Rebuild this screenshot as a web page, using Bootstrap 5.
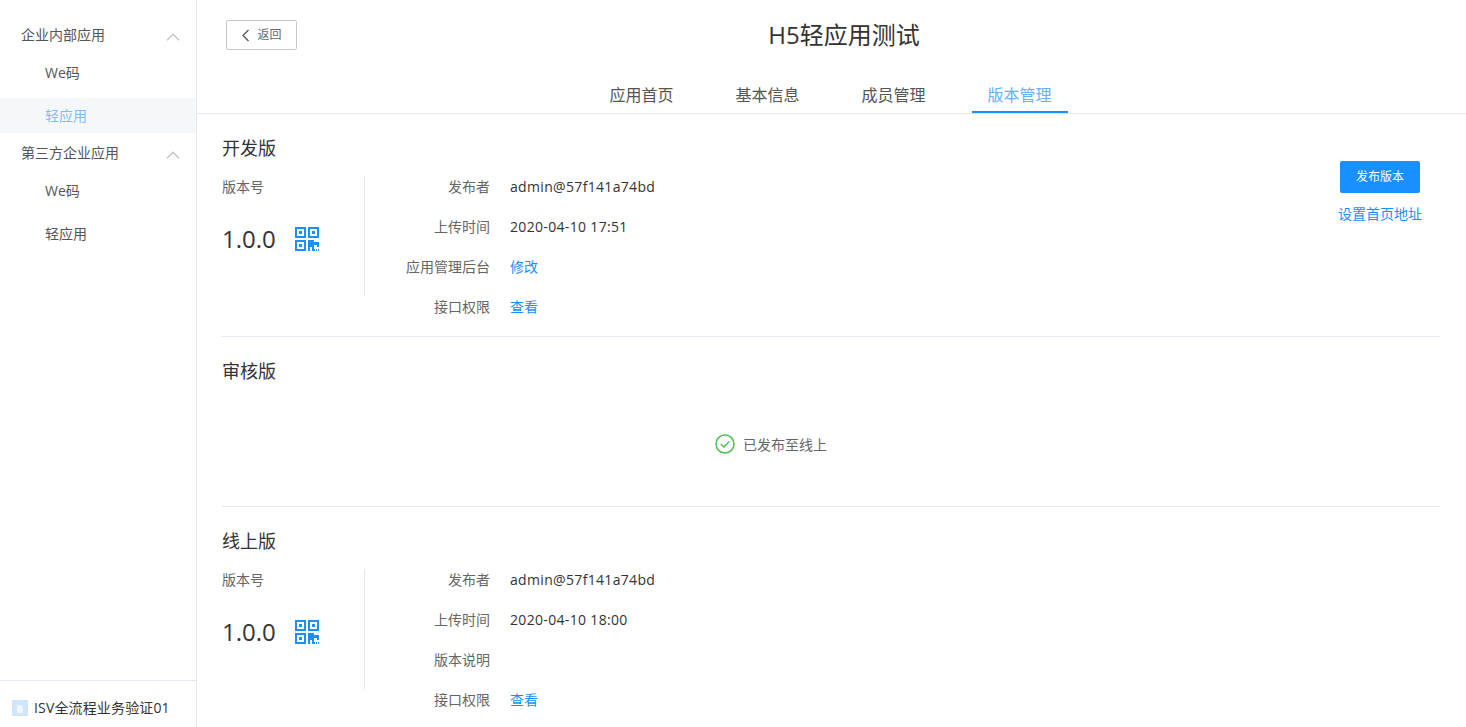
<!DOCTYPE html>
<html lang="zh">
<head>
<meta charset="utf-8">
<title>版本管理</title>
<link rel="stylesheet" href="https://cdn.jsdelivr.net/npm/bootstrap@5.3.0/dist/css/bootstrap.min.css">
<style>
html,body{height:727px;overflow:hidden}
body{font-family:"Open Sans","Noto Sans CJK SC",sans-serif;font-size:14px;color:#333;background:#fff}
.shell{height:727px}
.side{width:197px;flex:none;border-right:1px solid #e1e8ef;height:727px}
.side-list{padding-top:15px}
.side-group{height:40px;padding:0 16px 2px 21px;font-size:14px;color:#555}
.side-group svg{margin-top:6px}
.side-item{height:36px;padding:0 0 2px 45px;font-size:14px;color:#555}
.side-item + .side-item{margin-top:7px}
.side-item.active-item{height:35px;padding-bottom:0;background:#f5f8fb;color:#7dbcff}
.side-foot{height:47px;border-top:1px solid #e1e8ef;padding:7px 0 0 12px;color:#333;font-size:14px;gap:6px}
.side-foot span{letter-spacing:.15px}
.main-pane{min-width:0}
.head-wrap{height:114px;border-bottom:1px solid #e1e8ef;position:relative}
.head-top{height:73px;padding:20px 0 0 29px}
.back-btn{width:71px;height:30px;border:1px solid #c9c9c9;border-radius:2px;font-size:12px;color:#666;gap:7px;background:#fff;padding:0}
.page-title{position:absolute;left:25px;right:0;top:17px;margin:0;text-align:center;font-size:24px;font-weight:400;line-height:36px;color:#333;pointer-events:none}
.tab-row{height:40px;gap:30px;padding-right:2px}
.tab-link{width:96px;height:40px;font-size:16px;color:#555;text-decoration:none;text-align:center;line-height:44px;display:block}
.tab-link.on{color:#66b0ff;border-bottom:2px solid #1890ff}
.sect{margin:0 26px 0 25px;border-bottom:1px solid #e1e8ef}
.sect-a{height:223px;padding-top:21px}
.sect-b{height:170px;padding-top:21px}
.sect-c{border:0;padding-top:21px}
.sect-title{font-size:18px;font-weight:400;line-height:26px;margin:0 0 15px;color:#333}
.ver-col{width:143px;height:120px;border-right:1px solid #e1e8ef;flex:none}
.ver-label{font-size:14px;color:#666;line-height:22px}
.ver-num{font-size:24px;line-height:34px;color:#333;margin-top:24px;gap:19px}
.info-list{margin:0;padding:0;list-style:none}
.info-row{height:40px;margin:0}
.info-key{width:125px;text-align:right;font-size:14px;color:#666;line-height:22px;margin:0}
.info-val{margin:0 0 0 20px;font-size:14px;line-height:22px;color:#333;letter-spacing:.33px}
.info-val a,.link-plain{color:#1890ff;text-decoration:none;font-size:14px;letter-spacing:0}
.act-col{width:120px;margin-top:-15px}
.pub-btn{width:80px;height:32px;background:#1890ff;border:0;border-radius:2px;color:#fff;font-size:12px;padding:0}
.link-plain{margin-top:10px;line-height:22px}
.done-row{height:92px;gap:8px;color:#666;font-size:14px;padding-right:120px;margin-top:-1px}
</style>
</head>
<body>
<div class="shell d-flex">
  <aside class="side d-flex flex-column">
    <div class="side-list flex-grow-1">
      <div class="side-group d-flex align-items-center justify-content-between">
        <span>企业内部应用</span>
        <svg width="14" height="8" viewBox="0 0 14 8" fill="none" stroke="#c4c4c4" stroke-width="1.4"><path d="M1 7.200 7 1.200l6 6"/></svg>
      </div>
      <div class="side-item d-flex align-items-center">We码</div>
      <div class="side-item active-item d-flex align-items-center">轻应用</div>
      <div class="side-group d-flex align-items-center justify-content-between">
        <span>第三方企业应用</span>
        <svg width="14" height="8" viewBox="0 0 14 8" fill="none" stroke="#c4c4c4" stroke-width="1.4"><path d="M1 7.200 7 1.200l6 6"/></svg>
      </div>
      <div class="side-item d-flex align-items-center">We码</div>
      <div class="side-item d-flex align-items-center">轻应用</div>
    </div>
    <div class="side-foot d-flex align-items-center">
      <svg width="16" height="16" viewBox="0 0 16 16"><rect width="16" height="16" fill="#cfe6fd"/><path d="M5 13V5h4l2 2.500V13z" fill="#eef7ff"/></svg>
      <span>ISV全流程业务验证01</span>
    </div>
  </aside>
  <main class="main-pane flex-grow-1">
    <header class="head-wrap">
      <div class="head-top">
        <button type="button" class="back-btn btn d-flex align-items-center justify-content-center">
          <svg width="9" height="13" viewBox="0 0 9 13" fill="none" stroke="#555" stroke-width="1.3"><path d="M7.500 1 2 6.500 7.500 12"/></svg>
          <span>返回</span>
        </button>
      </div>
      <h1 class="page-title">H5轻应用测试</h1>
      <nav class="tab-row d-flex justify-content-center">
        <a class="tab-link" href="#">应用首页</a>
        <a class="tab-link" href="#">基本信息</a>
        <a class="tab-link" href="#">成员管理</a>
        <a class="tab-link on" href="#">版本管理</a>
      </nav>
    </header>

    <section class="sect sect-a">
      <h2 class="sect-title">开发版</h2>
      <div class="d-flex">
        <div class="ver-col">
          <div class="ver-label">版本号</div>
          <div class="ver-num d-flex align-items-center">
            <span>1.0.0</span>
            <svg width="24" height="24" viewBox="0 0 24 24"><g fill="#1890ff"><path d="M0 0h11v11H0zM13 0h11v11H13zM0 13h11v11H0z"/><path d="M13 13h6v2h5v5h-2v-2h-3v6h-2v-4h-2v4h-2z"/><path d="M19 22h1v2h-1zM21 22h1v2h-1zM23 22h1v2h-1z"/></g><g fill="#fff"><path d="M2 2h7v7H2zM15 2h7v7h-7zM2 15h7v7H2z"/></g><g fill="#1890ff"><path d="M4 4h3v3H4zM17 4h3v3h-3zM4 17h3v3H4z"/></g></svg>
          </div>
        </div>
        <ul class="info-list flex-grow-1">
          <li class="info-row d-flex"><p class="info-key">发布者</p><p class="info-val">admin@57f141a74bd</p></li>
          <li class="info-row d-flex"><p class="info-key">上传时间</p><p class="info-val">2020-04-10 17:51</p></li>
          <li class="info-row d-flex"><p class="info-key">应用管理后台</p><p class="info-val"><a href="#">修改</a></p></li>
          <li class="info-row d-flex"><p class="info-key">接口权限</p><p class="info-val"><a href="#">查看</a></p></li>
        </ul>
        <div class="act-col d-flex flex-column align-items-center">
          <button type="button" class="pub-btn btn">发布版本</button>
          <a class="link-plain" href="#">设置首页地址</a>
        </div>
      </div>
    </section>

    <section class="sect sect-b">
      <h2 class="sect-title">审核版</h2>
      <div class="done-row d-flex align-items-center justify-content-center">
        <svg width="20" height="20" viewBox="0 0 20 20" fill="none" stroke="#4fbf4f" stroke-width="1.500"><circle cx="10" cy="10" r="9"/><path d="M5.800 10.200 8.800 13l5.400-5.600"/></svg>
        <span>已发布至线上</span>
      </div>
    </section>

    <section class="sect sect-c">
      <h2 class="sect-title">线上版</h2>
      <div class="d-flex">
        <div class="ver-col">
          <div class="ver-label">版本号</div>
          <div class="ver-num d-flex align-items-center">
            <span>1.0.0</span>
            <svg width="24" height="24" viewBox="0 0 24 24"><g fill="#1890ff"><path d="M0 0h11v11H0zM13 0h11v11H13zM0 13h11v11H0z"/><path d="M13 13h6v2h5v5h-2v-2h-3v6h-2v-4h-2v4h-2z"/><path d="M19 22h1v2h-1zM21 22h1v2h-1zM23 22h1v2h-1z"/></g><g fill="#fff"><path d="M2 2h7v7H2zM15 2h7v7h-7zM2 15h7v7H2z"/></g><g fill="#1890ff"><path d="M4 4h3v3H4zM17 4h3v3h-3zM4 17h3v3H4z"/></g></svg>
          </div>
        </div>
        <ul class="info-list flex-grow-1">
          <li class="info-row d-flex"><p class="info-key">发布者</p><p class="info-val">admin@57f141a74bd</p></li>
          <li class="info-row d-flex"><p class="info-key">上传时间</p><p class="info-val">2020-04-10 18:00</p></li>
          <li class="info-row d-flex"><p class="info-key">版本说明</p><p class="info-val"></p></li>
          <li class="info-row d-flex"><p class="info-key">接口权限</p><p class="info-val"><a href="#">查看</a></p></li>
        </ul>
      </div>
    </section>
  </main>
</div>
<script src="https://cdn.jsdelivr.net/npm/bootstrap@5.3.0/dist/js/bootstrap.bundle.min.js"></script>
</body>
</html>
